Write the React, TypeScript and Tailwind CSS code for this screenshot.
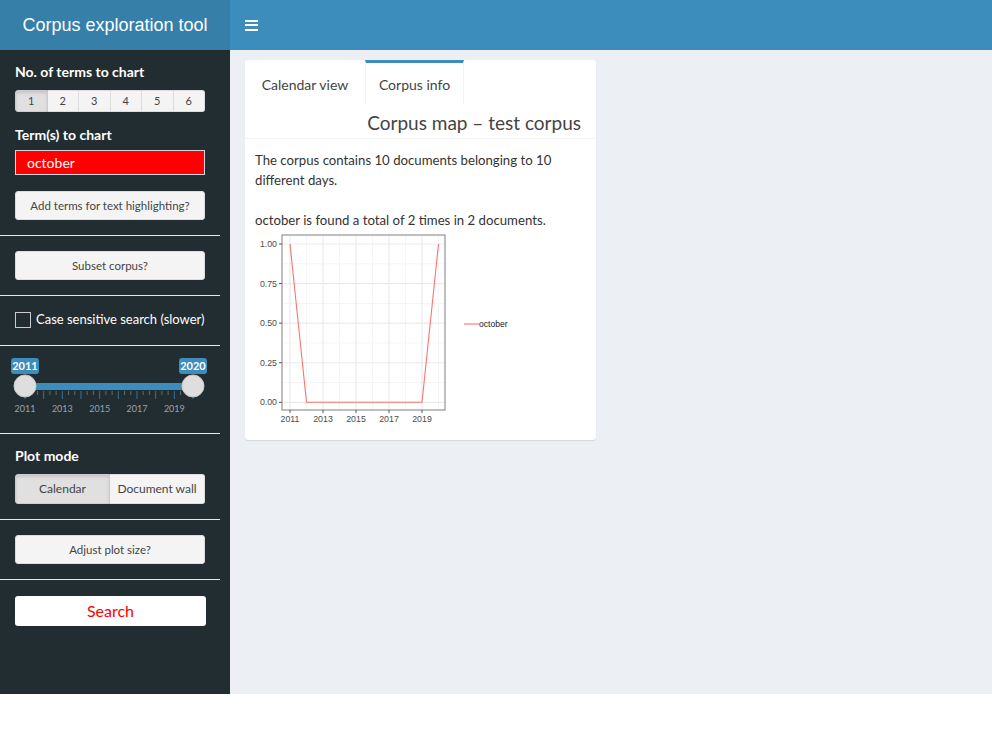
import React from "react";

const sans = { fontFamily: "Lato, 'Open Sans', sans-serif" };

function Divider() {
    return <div className="h-px w-[220px] bg-[#e8e8e8]" />;
}

function GreyButton({ label }: { label: string }) {
    return (
        <button className="mx-[15px] flex h-[29px] w-[190px] items-center justify-center rounded-[3px] border border-[#ddd] bg-[#f4f4f4] text-[11.5px] text-[#444]">
            {label}
        </button>
    );
}

function Slider() {
    const left = 25;
    const right = 193;
    const step = (right - left) / 9;
    const ticks: React.ReactNode[] = [];
    for (let i = 0; i <= 27; i++) {
        const x = left + (i * step) / 3;
        const major = i % 3 === 0;
        ticks.push(
            <line
                key={i}
                x1={x}
                x2={x}
                y1={391}
                y2={major ? 399 : 395}
                stroke={major ? "#3f6f93" : "#5a6e7c"}
                strokeWidth={1}
            />
        );
    }
    const labels = [2011, 2013, 2015, 2017, 2019];
    return (
        <svg width={230} height={87} viewBox="0 346 230 87" className="block">
            {ticks}
            <rect x={left} y={383} width={right - left} height={7} fill="#3c8dbc" />
            {labels.map((y, i) => (
                <text
                    key={y}
                    x={left + i * 2 * step}
                    y={412}
                    textAnchor="middle"
                    fontSize={9}
                    fill="#99a3aa"
                    fontFamily="Lato, sans-serif"
                >
                    {y}
                </text>
            ))}
            <rect x={11} y={358} width={28} height={16} rx={3} fill="#3c8dbc" />
            <text x={25} y={370} textAnchor="middle" fontSize={11} fill="#fff" fontWeight={700} fontFamily="Lato, sans-serif">
                2011
            </text>
            <rect x={179} y={358} width={28} height={16} rx={3} fill="#3c8dbc" />
            <text x={193} y={370} textAnchor="middle" fontSize={11} fill="#fff" fontWeight={700} fontFamily="Lato, sans-serif">
                2020
            </text>
            <circle cx={left} cy={386} r={11} fill="#dedede" stroke="#c8c8c8" strokeWidth={1} />
            <circle cx={right} cy={386} r={11} fill="#dedede" stroke="#c8c8c8" strokeWidth={1} />
        </svg>
    );
}

function Chart() {
    const xAt = (yr: number) => 35 + (yr - 2011) * 16.5;
    const yAt = (v: number) => 172.3 - v * 158.3;
    const data = [1, 0, 0, 0, 0, 0, 0, 0, 0, 1];
    const pts = data.map((v, i) => `${xAt(2011 + i)},${yAt(v)}`).join(" ");
    const majorY = [0, 0.25, 0.5, 0.75, 1];
    const minorY = [0.125, 0.375, 0.625, 0.875];
    const majorX = [2011, 2013, 2015, 2017, 2019];
    const minorX = [2012, 2014, 2016, 2018, 2020];
    const font = "Liberation Sans, Arial, sans-serif";
    return (
        <svg width={300} height={196} viewBox="0 230 300 196" className="block">
            <g transform="translate(0,230)">
                <rect x={27} y={5} width={163} height={175} fill="#fff" />
                {minorY.map((v) => (
                    <line key={v} x1={27} x2={190} y1={yAt(v)} y2={yAt(v)} stroke="#f5f5f5" strokeWidth={1} />
                ))}
                {minorX.map((v) => (
                    <line key={v} x1={xAt(v)} x2={xAt(v)} y1={5} y2={180} stroke="#f5f5f5" strokeWidth={1} />
                ))}
                {majorY.map((v) => (
                    <line key={v} x1={27} x2={190} y1={yAt(v)} y2={yAt(v)} stroke="#ebebeb" strokeWidth={1.2} />
                ))}
                {majorX.map((v) => (
                    <line key={v} x1={xAt(v)} x2={xAt(v)} y1={5} y2={180} stroke="#ebebeb" strokeWidth={1.2} />
                ))}
                <polyline points={pts} fill="none" stroke="#f8766d" strokeWidth={1.1} />
                <rect x={27} y={5} width={163} height={175} fill="none" stroke="#7f7f7f" strokeWidth={1} />
                {majorY.map((v) => (
                    <g key={v}>
                        <line x1={24} x2={27} y1={yAt(v)} y2={yAt(v)} stroke="#555" strokeWidth={1} />
                        <text x={22} y={yAt(v) + 3} textAnchor="end" fontSize={8.8} fill="#4d4d4d" fontFamily={font}>
                            {v.toFixed(2)}
                        </text>
                    </g>
                ))}
                {majorX.map((v) => (
                    <g key={v}>
                        <line x1={xAt(v)} x2={xAt(v)} y1={180} y2={183} stroke="#555" strokeWidth={1} />
                        <text x={xAt(v)} y={192} textAnchor="middle" fontSize={8.8} fill="#4d4d4d" fontFamily={font}>
                            {v}
                        </text>
                    </g>
                ))}
                <line x1={209} x2={224} y1={94} y2={94} stroke="#f8766d" strokeWidth={1.1} />
                <text x={224} y={97} fontSize={8.6} fill="#1a1a1a" fontFamily={font}>
                    october
                </text>
            </g>
        </svg>
    );
}

export default function App() {
    return (
        <div className="flex h-[694px] w-[992px] flex-col bg-white" style={sans}>
            <header className="flex h-[50px] shrink-0">
                <div
                    className="flex w-[230px] items-center justify-center bg-[#367fa9] text-[18px] text-white"
                    style={{ fontFamily: "'Liberation Sans', Arial, sans-serif" }}
                >
                    Corpus exploration tool
                </div>
                <div className="flex flex-1 items-center bg-[#3c8dbc] pl-[15px]">
                    <div className="flex w-[13px] flex-col gap-[2.5px]">
                        <span className="h-[2px] bg-white" />
                        <span className="h-[2px] bg-white" />
                        <span className="h-[2px] bg-white" />
                    </div>
                </div>
            </header>

            <div className="flex flex-1">
                <aside className="w-[230px] shrink-0 bg-[#222d32] pt-[13px]">
                    <div className="px-[15px] text-[14px] font-bold leading-[18px] text-white">No. of terms to chart</div>
                    <div className="mx-[15px] mt-[9px] flex h-[22px] w-[190px]">
                        {[1, 2, 3, 4, 5, 6].map((n) => (
                            <div
                                key={n}
                                className={
                                    n === 1
                                        ? "flex flex-1 items-center justify-center rounded-l-[3px] border border-[#ccc] bg-[#e0e0e0] text-[11px] text-[#444] shadow-[inset_0_2px_3px_rgba(0,0,0,0.12)]"
                                        : n === 6
                                        ? "flex flex-1 items-center justify-center rounded-r-[3px] border border-l-0 border-[#ddd] bg-[#f4f4f4] text-[11px] text-[#444]"
                                        : "flex flex-1 items-center justify-center border border-l-0 border-[#ddd] bg-[#f4f4f4] text-[11px] text-[#444]"
                                }
                            >
                                {n}
                            </div>
                        ))}
                    </div>

                    <div className="mt-[14px] px-[15px] text-[14px] font-bold leading-[18px] text-white">Term(s) to chart</div>
                    <div className="mx-[15px] mt-[6px] flex h-[25px] w-[190px] items-center border border-[#d2d6de] bg-[#ff0000] pl-[11px] text-[14px] text-white">
                        october
                    </div>

                    <div className="mt-[16px]">
                        <GreyButton label="Add terms for text highlighting?" />
                    </div>
                    <div className="mt-[15px]">
                        <Divider />
                    </div>
                    <div className="mt-[15px]">
                        <GreyButton label="Subset corpus?" />
                    </div>
                    <div className="mt-[15px]">
                        <Divider />
                    </div>

                    <div className="mt-[16px] flex h-[16px] items-center gap-[5px] px-[15px]">
                        <span className="h-[16px] w-[16px] shrink-0 border border-[#ccc] bg-transparent" />
                        <span className="whitespace-nowrap text-[13px] text-white">Case sensitive search (slower)</span>
                    </div>
                    <div className="mt-[17px]">
                        <Divider />
                    </div>

                    <Slider />
                    <Divider />

                    <div className="mt-[13px] px-[15px] text-[14px] font-bold leading-[18px] text-white">Plot mode</div>
                    <div className="mx-[15px] mt-[9px] flex h-[30px] w-[190px] text-[12px] text-[#444]">
                        <div className="flex w-[95px] items-center justify-center rounded-l-[3px] border border-[#ccc] bg-[#e0e0e0] shadow-[inset_0_2px_3px_rgba(0,0,0,0.12)]">
                            Calendar
                        </div>
                        <div className="flex flex-1 items-center justify-center rounded-r-[3px] border border-l-0 border-[#ddd] bg-[#f4f4f4]">
                            Document wall
                        </div>
                    </div>
                    <div className="mt-[15px]">
                        <Divider />
                    </div>
                    <div className="mt-[15px]">
                        <GreyButton label="Adjust plot size?" />
                    </div>
                    <div className="mt-[15px]">
                        <Divider />
                    </div>
                    <div className="mt-[16px] px-[15px]">
                        <button className="flex h-[30px] w-[191px] items-center justify-center rounded-[3px] bg-white text-[16px] text-[#ff0000]">
                            Search
                        </button>
                    </div>
                </aside>

                <main className="flex-1 bg-[#ecf0f5] pl-[15px] pt-[10px]">
                    <div className="w-[351px] rounded-[3px] bg-white shadow-[0_1px_1px_rgba(0,0,0,0.1)]">
                        <div className="flex h-[48px] text-[14px] text-[#444]">
                            <div className="flex h-[45px] w-[120px] items-center justify-center border-t-[3px] border-transparent">
                                Calendar view
                            </div>
                            <div className="flex h-[45px] w-[99px] items-center justify-center border-x border-t-[3px] border-x-[#f4f4f4] border-t-[#3c8dbc]">
                                Corpus info
                            </div>
                        </div>
                        <div className="flex h-[31px] items-center justify-end border-b border-[#f4f4f4] pr-[15px] text-[19px] text-[#444]">
                            Corpus map – test corpus
                        </div>
                        <div className="px-[10px] pb-[14px] pt-[11px] text-[13.2px] leading-[20px] text-[#333]">
                            <p>
                                The corpus contains 10 documents belonging to 10
                                <br />
                                different days.
                            </p>
                            <p className="mt-[20px]">october is found a total of 2 times in 2 documents.</p>
                            <div>
                                <Chart />
                            </div>
                        </div>
                    </div>
                </main>
            </div>
        </div>
    );
}
